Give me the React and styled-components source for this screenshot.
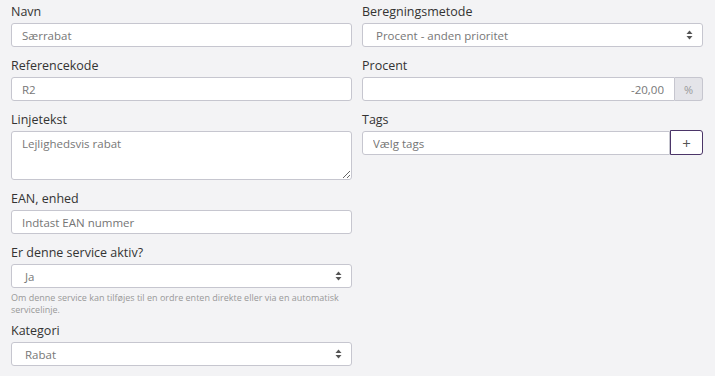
import React from 'react';
import styled, {createGlobalStyle} from 'styled-components';

const GlobalStyle = createGlobalStyle`
    html, body {
        margin: 0;
        padding: 0;
        background: #f3f3f5;
    }
    * {
        box-sizing: border-box;
    }
`;

const SortIcon = () => (
    <svg width="7" height="10" viewBox="0 0 7 10">
        <path d="M3.5 0.5 L6.5 4 L0.5 4 Z" fill="#555" />
        <path d="M3.5 9.5 L6.5 6 L0.5 6 Z" fill="#555" />
    </svg>
);

const Field = ({label, children, help}) => (
    <FieldWrap>
        <Label>{label}</Label>
        {children}
        {help && <Help>{help}</Help>}
    </FieldWrap>
);

const FakeSelect = ({value}) => (
    <Select>
        <span>{value}</span>
        <SortIcon />
    </Select>
);

const App = () => {
    return (
        <Page>
            <GlobalStyle />
            <Column>
                <Field label="Navn">
                    <Input defaultValue="Særrabat" />
                </Field>
                <Field label="Referencekode">
                    <Input defaultValue="R2" />
                </Field>
                <Field label="Linjetekst">
                    <TextArea defaultValue="Lejlighedsvis rabat" />
                </Field>
                <Field label="EAN, enhed">
                    <Input placeholder="Indtast EAN nummer" />
                </Field>
                <Field
                    label="Er denne service aktiv?"
                    help="Om denne service kan tilføjes til en ordre enten direkte eller via en automatisk servicelinje."
                >
                    <FakeSelect value="Ja" />
                </Field>
                <Field label="Kategori">
                    <FakeSelect value="Rabat" />
                </Field>
            </Column>
            <Column>
                <Field label="Beregningsmetode">
                    <FakeSelect value="Procent - anden prioritet" />
                </Field>
                <Field label="Procent">
                    <Group>
                        <Input defaultValue="-20,00" $align="right" $joined />
                        <Addon>%</Addon>
                    </Group>
                </Field>
                <Field label="Tags">
                    <Group>
                        <Input placeholder="Vælg tags" $joined />
                        <PlusButton>+</PlusButton>
                    </Group>
                </Field>
            </Column>
        </Page>
    );
};

export default App;

const Page = styled.div`
    display: grid;
    grid-template-columns: 341px 341px;
    column-gap: 10px;
    align-items: start;
    padding: 3px 13px 0 11px;
    width: 715px;
    height: 376px;
    font-family: "Open Sans", "Liberation Sans", sans-serif;
`;

const Column = styled.div`
    display: flex;
    flex-direction: column;
`;

const FieldWrap = styled.div`
    display: flex;
    flex-direction: column;
    margin-bottom: 10px;
`;

const Label = styled.label`
    font-size: 12.5px;
    line-height: 17px;
    color: #333;
    margin-bottom: 3px;
`;

const Input = styled.input`
    width: 100%;
    height: 24px;
    padding: 0 10px;
    font-family: inherit;
    font-size: 11.5px;
    color: #777;
    background: #fff;
    border: 1px solid #c6c6cf;
    border-radius: ${props => props.$joined ? '3px 0 0 3px' : '3px'};
    text-align: ${props => props.$align || 'left'};
    outline: none;

    ::placeholder {
        color: #9a9aa3;
    }
`;

const TextArea = styled.textarea`
    width: 100%;
    height: 49px;
    padding: 4px 10px;
    font-family: inherit;
    font-size: 11.5px;
    color: #777;
    background: #fff;
    border: 1px solid #c6c6cf;
    border-radius: 3px;
    resize: vertical;
    outline: none;
`;

const Select = styled.div`
    display: flex;
    align-items: center;
    justify-content: space-between;
    height: 24px;
    padding: 0 9px 0 13px;
    font-size: 11.5px;
    color: #777;
    background: #fff;
    border: 1px solid #c6c6cf;
    border-radius: 3px;
`;

const Help = styled.div`
    margin-top: 4px;
    margin-bottom: -4px;
    font-size: 9px;
    line-height: 12px;
    color: #999;
`;

const Group = styled.div`
    display: flex;
    align-items: stretch;
`;

const Addon = styled.div`
    display: flex;
    align-items: center;
    justify-content: center;
    flex: 0 0 28px;
    height: 24px;
    font-size: 11px;
    color: #999;
    background: #e4e4e9;
    border: 1px solid #c6c6cf;
    border-left: none;
    border-radius: 0 3px 3px 0;
`;

const PlusButton = styled.button`
    flex: 0 0 33px;
    height: 25px;
    margin-top: -1px;
    padding: 0;
    font-family: inherit;
    font-size: 15px;
    color: #555;
    background: #fff;
    border: 1px solid #4b3568;
    border-radius: 0 3px 3px 0;
`;
